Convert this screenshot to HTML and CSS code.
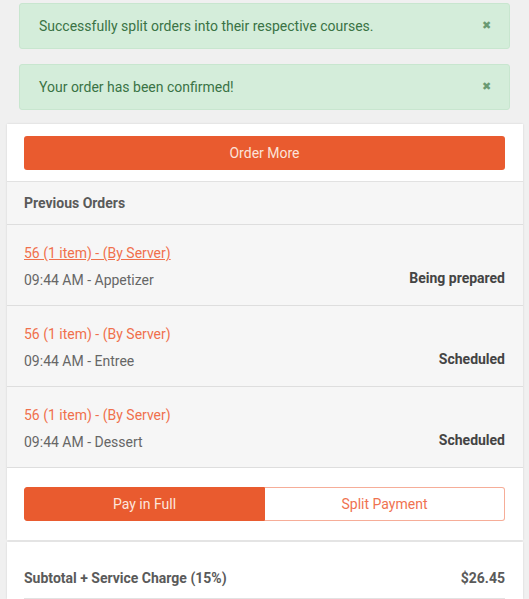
FILE: index.html
```html
<!DOCTYPE html>
<html>
<head>
<title>Order Status</title>
<meta name="viewport" content="width=device-width, initial-scale=1">
<link rel="stylesheet" href="styles.css">
</head>
<body>
<div class="alerts">
	<div class="alert">
		<span>Successfully split orders into their respective courses.</span>
		<span class="close">&#x2716;</span>
	</div>
	<div class="alert">
		<span>Your order has been confirmed!</span>
		<span class="close">&#x2716;</span>
	</div>
</div>

<div class="card">
	<div class="card-top">
		<button class="btn-primary">Order More</button>
	</div>
	<div class="orders-head">Previous Orders</div>
	<div class="order">
		<div class="order-info">
			<a class="order-link underlined" href="#">56 (1 item) - (By Server)</a>
			<div class="order-time">09:44 AM - Appetizer</div>
		</div>
		<div class="order-status">Being prepared</div>
	</div>
	<div class="order">
		<div class="order-info">
			<a class="order-link" href="#">56 (1 item) - (By Server)</a>
			<div class="order-time">09:44 AM - Entree</div>
		</div>
		<div class="order-status">Scheduled</div>
	</div>
	<div class="order">
		<div class="order-info">
			<a class="order-link" href="#">56 (1 item) - (By Server)</a>
			<div class="order-time">09:44 AM - Dessert</div>
		</div>
		<div class="order-status">Scheduled</div>
	</div>
	<div class="pay-section">
		<div class="toggle">
			<button class="toggle-btn active">Pay in Full</button>
			<button class="toggle-btn">Split Payment</button>
		</div>
	</div>
</div>

<div class="card totals">
	<div class="total-row">
		<span>Subtotal + Service Charge (15%)</span>
		<span>$26.45</span>
	</div>
</div>
</body>
</html>
```

FILE: styles.css
```css
body {
margin:0;
padding-top:3px;
background:#f0f0f0;
font-family:Roboto, "Liberation Sans", sans-serif;
font-size:14px;
line-height:16px;
color:#555;
}

.alerts {
display:flex;
flex-direction:column;
gap:15px;
margin:0 19px 14px 19px;
}
.alert {
display:flex;
justify-content:space-between;
align-items:center;
height:46px;
box-sizing:border-box;
padding:0 18px 0 19px;
background:#d4edda;
border:1px solid #c8e6cf;
border-radius:3px;
color:#3a7345;
}
.alert .close {
color:#6a9a72;
font-size:11px;
}

.card {
margin:0 6px 0 7px;
background:#fff;
box-shadow:0 0 2px rgba(0,0,0,.12);
}

.card-top {
padding:12px 18px 11px 17px;
border-bottom:1px solid #e2e2e2;
}
.btn-primary {
display:block;
width:100%;
height:34px;
border:0;
border-radius:3px;
background:#e95b2f;
color:#fbe3d9;
font-family:inherit;
font-size:14px;
}

.orders-head {
height:42px;
line-height:42px;
padding:0 17px;
background:#f6f6f6;
border-bottom:1px solid #dedede;
font-weight:bold;
color:#5a5a5a;
}

.order {
display:flex;
justify-content:space-between;
align-items:flex-end;
height:81px;
box-sizing:border-box;
padding:20px 18px 17px 17px;
background:#f6f6f6;
border-bottom:1px solid #dedede;
}
.order-link {
color:#f0704c;
text-decoration:none;
}
.order-link.underlined {
text-decoration:underline;
}
.order-time {
margin-top:11px;
color:#666;
}
.order-status {
font-weight:bold;
color:#444;
padding-bottom:2px;
}

.pay-section {
padding:19px 18px 19px 17px;
}
.toggle {
display:flex;
height:34px;
}
.toggle-btn {
flex:1;
border:1px solid #f6ad98;
border-left:0;
border-radius:0 3px 3px 0;
background:#fff;
color:#ef7250;
font-family:inherit;
font-size:14px;
}
.toggle-btn.active {
background:#e95b2f;
border:1px solid #e95b2f;
border-radius:3px 0 0 3px;
color:#fde6dd;
}

.totals {
margin-top:2px;
padding:28px 18px 0 17px;
}
.total-row {
display:flex;
justify-content:space-between;
padding-bottom:12px;
border-bottom:1px solid #e2e2e2;
font-weight:bold;
color:#5a5a5a;
}
```
